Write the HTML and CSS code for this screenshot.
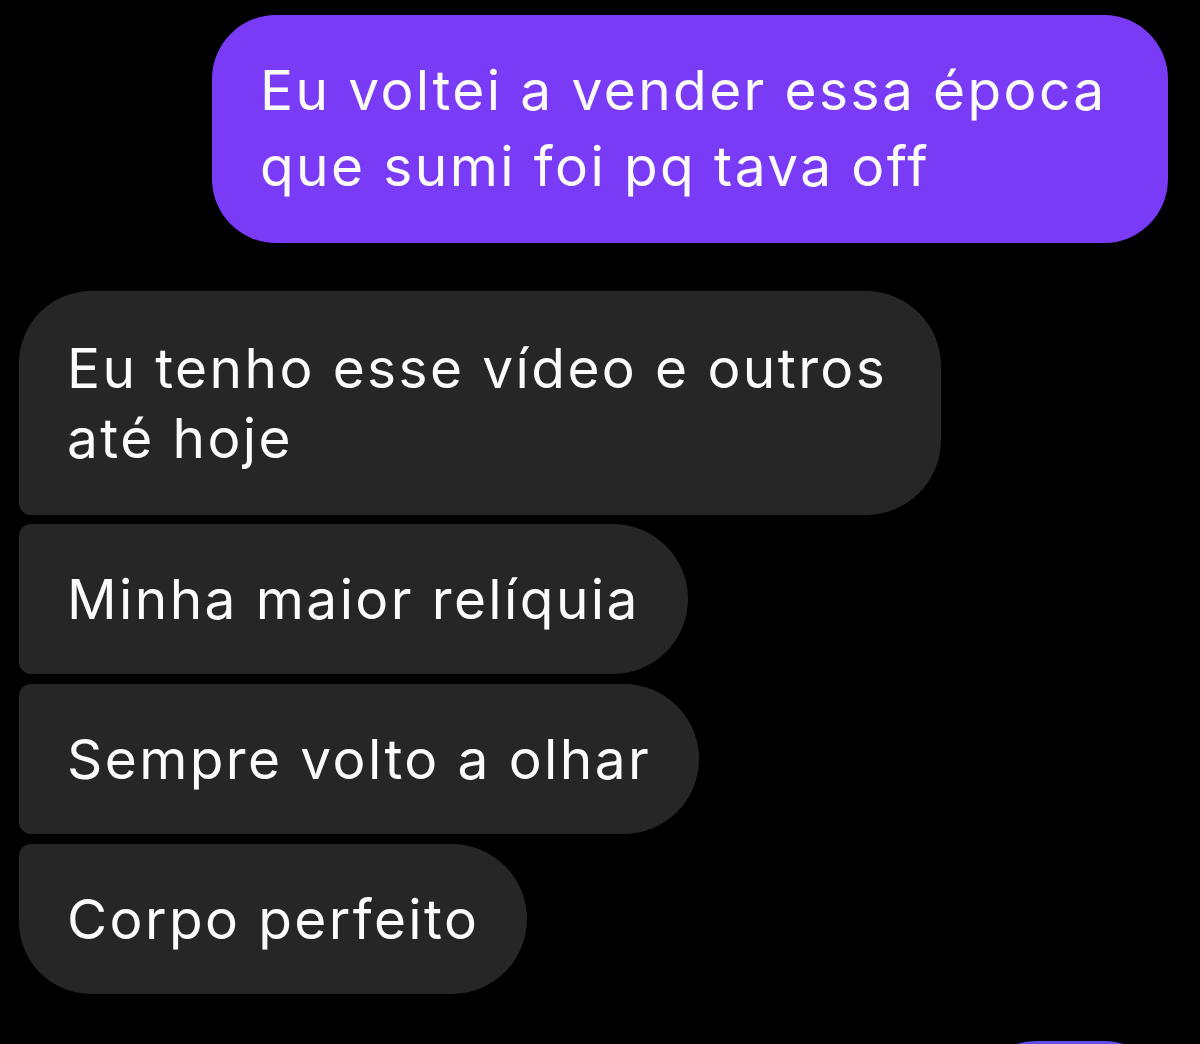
FILE: index.html
```html
<!DOCTYPE html>
<html lang="pt-BR">
<head>
<meta charset="UTF-8">
<title>Conversa</title>
<link rel="stylesheet" href="styles.css">
</head>
<body>

<!-- ===== THREAD ===== -->
<div id="thread">

  <div class="msg out">Eu voltei a vender essa época que sumi foi pq tava off</div>

  <div class="group">
    <div class="msg in first">Eu tenho esse vídeo e outros até hoje</div>
    <div class="msg in single mid">Minha maior relíquia</div>
    <div class="msg in single mid">Sempre volto a olhar</div>
    <div class="msg in single last">Corpo perfeito</div>
  </div>

  <!-- next bubble, only its top edge shows -->
  <div class="msg out next"></div>

</div>

</body>
</html>
```

FILE: styles.css
```css
html {
  overflow: hidden;
}

body {
  margin: 0;
  background: #000;
  font-family: Inter, "Noto Sans", sans-serif;
  font-size: 55px;
  letter-spacing: 2.4px;
  color: #fafafa;
}

/* ===== THREAD ===== */
#thread {
  display: flex;
  flex-direction: column;
  padding: 15px 32px 0 19px;
}

.msg {
  box-sizing: border-box;
}

/* ===== OUTGOING ===== */
.msg.out {
  align-self: flex-end;
  max-width: 956px;
  background: #7a3bf6;
  line-height: 76px;
  padding: 37px 54px 39px 48px;
  border-radius: 64px;
}

.msg.out.next {
  margin-top: 47px;
  width: 196px;
  height: 150px;
  padding: 0;
  background: #5b50ea;
}

/* ===== INCOMING ===== */
.group {
  display: flex;
  flex-direction: column;
  align-items: flex-start;
  gap: 10px;
  margin-top: 48px;
}

.msg.in {
  max-width: 922px;
  background: #262626;
  line-height: 70px;
  padding: 42px 48px;
  border-radius: 75px;
}

.msg.in.single {
  padding: 40px 48px;
}

.msg.in.first {
  border-radius: 72px 75px 75px 12px;
  margin-bottom: -1px;
}

.msg.in.mid {
  border-radius: 12px 75px 75px 12px;
}

.msg.in.last {
  border-radius: 12px 75px 75px 72px;
}
```
